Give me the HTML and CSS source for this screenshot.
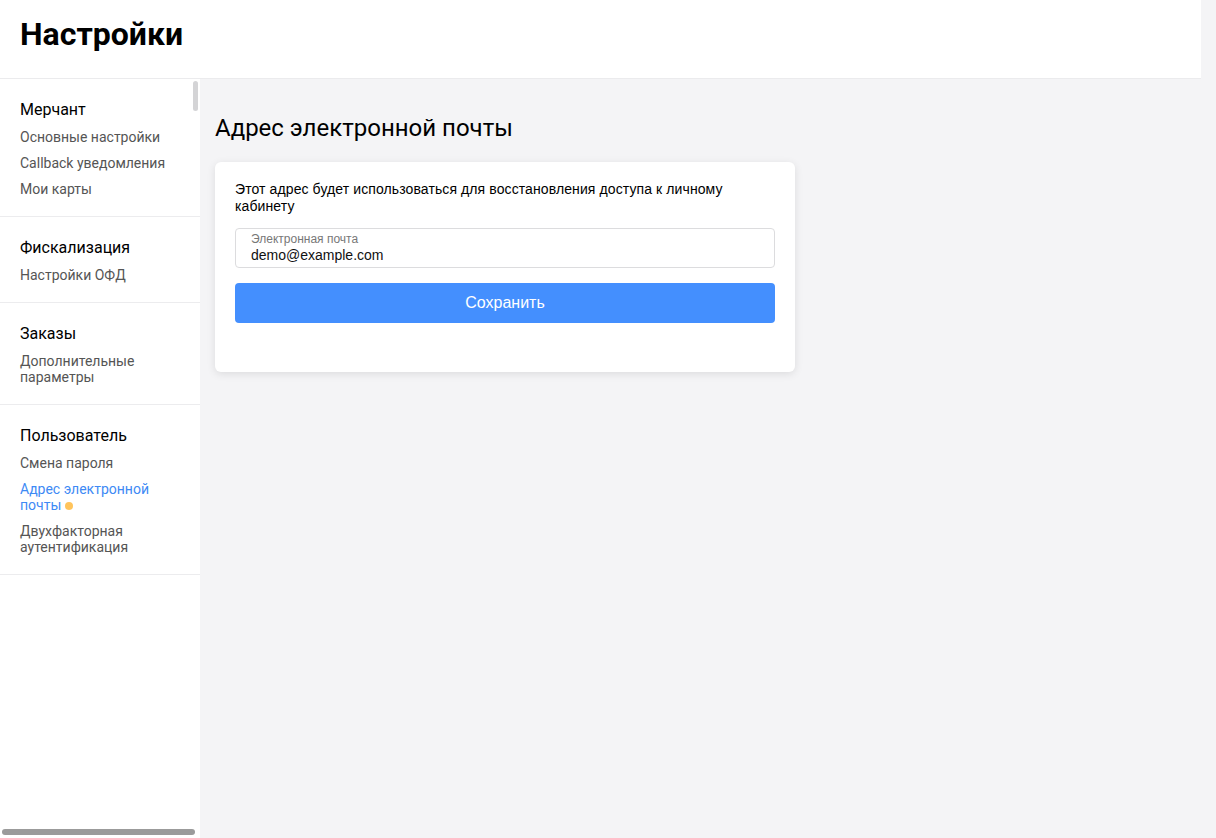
FILE: index.html
```html
<!DOCTYPE html>
<html lang="ru">
<head>
  <meta charset="UTF-8">
  <meta name="viewport" content="width=device-width, initial-scale=1.0">
  <title>Настройки</title>
  <link rel="stylesheet" href="styles.css">
</head>
<body>
  <div class="page">
    <header class="topbar">
      <h1>Настройки</h1>
    </header>

    <div class="layout">
      <nav class="sidebar">
        <div class="nav-group">
          <div class="nav-title">Мерчант</div>
          <a class="nav-link" href="#">Основные настройки</a>
          <a class="nav-link" href="#">Callback уведомления</a>
          <a class="nav-link" href="#">Мои карты</a>
        </div>
        <div class="nav-group">
          <div class="nav-title">Фискализация</div>
          <a class="nav-link" href="#">Настройки ОФД</a>
        </div>
        <div class="nav-group">
          <div class="nav-title">Заказы</div>
          <a class="nav-link" href="#">Дополнительные параметры</a>
        </div>
        <div class="nav-group">
          <div class="nav-title">Пользователь</div>
          <a class="nav-link" href="#">Смена пароля</a>
          <a class="nav-link active" href="#">Адрес электронной почты<span class="dot"></span></a>
          <a class="nav-link" href="#">Двухфакторная аутентификация</a>
        </div>

        <div class="scroll-v"></div>
        <div class="scroll-h"></div>
      </nav>

      <main class="content">
        <h2 class="content-title">Адрес электронной почты</h2>

        <section class="card">
          <p class="card-text">Этот адрес будет использоваться для восстановления доступа к личному кабинету</p>

          <label class="field">
            <span class="field-label">Электронная почта</span>
            <input class="field-input" type="email" value="demo@example.com">
          </label>

          <button class="btn-primary" type="button">Сохранить</button>
        </section>
      </main>
    </div>
  </div>
</body>
</html>
```

FILE: styles.css
```css
* {
  box-sizing: border-box;
}

body {
  margin: 0;
  padding: 0;
  background-color: #f4f4f6;
  font-family: Roboto, 'Noto Sans', sans-serif;
  color: #000;
}

.page {
  height: 100vh;
  display: flex;
  flex-direction: column;
}

.topbar {
  width: calc(100% - 15px);
  height: 79px;
  background: #fff;
  border-bottom: 1px solid #ebebed;
  padding: 0 20px;
  display: flex;
  align-items: center;
}

.topbar h1 {
  margin: 0 0 11px;
  font-size: 32px;
  font-weight: 700;
}

.layout {
  flex-grow: 1;
  display: flex;
  min-height: 0;
}

/* left menu */
.sidebar {
  position: relative;
  width: 200px;
  flex-shrink: 0;
  background: #fff;
}

.nav-group {
  padding: 21px 20px 19px;
  border-bottom: 1px solid #ececee;
  display: flex;
  flex-direction: column;
}

.nav-title {
  font-size: 16px;
  line-height: 20px;
  margin-bottom: 9px;
}

.nav-link {
  font-size: 14px;
  line-height: 16px;
  color: #555;
  text-decoration: none;
  margin-bottom: 10px;
}
.nav-link:last-child {
  margin-bottom: 0;
}
.nav-link.active {
  color: #3e8af5;
}

.dot {
  display: inline-block;
  width: 8px;
  height: 8px;
  margin-left: 4px;
  border-radius: 50%;
  background: #ffc45c;
  vertical-align: 0;
}

/* overlay scrollbars */
.scroll-v {
  position: absolute;
  top: 2px;
  right: 2px;
  width: 5px;
  height: 30px;
  border-radius: 3px;
  background: #d4d4d6;
}
.scroll-h {
  position: absolute;
  bottom: 3px;
  left: 2px;
  width: 193px;
  height: 6px;
  border-radius: 3px;
  background: #9b9b9b;
}

/* main area */
.content {
  flex-grow: 1;
  padding: 35px 15px;
}

.content-title {
  margin: 0 0 20px;
  font-size: 24px;
  line-height: 28px;
  font-weight: 400;
}

.card {
  width: 580px;
  background: #fff;
  border-radius: 6px;
  box-shadow: 0 2px 8px rgba(0, 0, 0, 0.1);
  padding: 19px 20px 49px;
  font-family: 'Liberation Sans', Arial, sans-serif;
}

.card-text {
  margin: 0 0 13px;
  font-size: 14px;
  line-height: 17px;
  letter-spacing: 0.1px;
}

.field {
  display: flex;
  flex-direction: column;
  height: 40px;
  border: 1px solid #dcdcde;
  border-radius: 4px;
  padding: 4px 15px 0;
  margin-bottom: 15px;
}

.field-label {
  font-size: 12px;
  line-height: 13px;
  color: #777;
}

.field-input {
  border: none;
  outline: none;
  padding: 0;
  font-family: inherit;
  font-size: 14px;
  line-height: 18px;
  color: #111;
  background: transparent;
}

.btn-primary {
  display: block;
  width: 100%;
  height: 40px;
  border: none;
  border-radius: 4px;
  background: #448ffe;
  color: #fff;
  font-family: inherit;
  font-size: 16px;
  cursor: pointer;
}
```
